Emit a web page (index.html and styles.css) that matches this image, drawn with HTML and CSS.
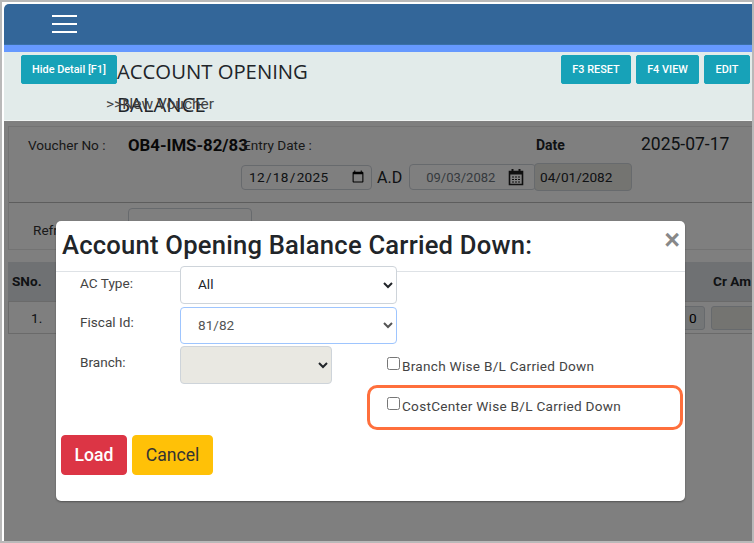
FILE: index.html
```html
<!DOCTYPE html>
<html lang="en">
<head>
<meta charset="utf-8">
<title>Account Opening Balance</title>
<link rel="stylesheet" href="styles.css">
</head>
<body>
<div class="frame">
  <div class="app">
    <nav class="navbar">
      <span class="burger"><i></i><i></i><i></i></span>
    </nav>
    <header class="toolbar">
      <div class="toolbar-left">
        <button class="btn-info btn-hide">Hide Detail [F1]</button>
        <div class="title-block">
          <h1 class="page-title">ACCOUNT OPENING BALANCE</h1>
          <div class="crumb">&gt;&gt;New Voucher</div>
        </div>
      </div>
      <div class="toolbar-right">
        <button class="btn-info btn-reset">F3 RESET</button>
        <button class="btn-info btn-view">F4 VIEW</button>
        <button class="btn-info btn-edit">EDIT</button>
      </div>
    </header>
    <main class="content">
      <section class="panel">
        <div class="panel-top">
          <span class="lbl lbl-voucher">Voucher No :</span>
          <strong class="voucher-no">OB4-IMS-82/83</strong>
          <div class="entry-col">
            <span class="lbl lbl-entry">Entry Date :</span>
            <div class="entry-inputs">
              <input class="date-ad" type="date" value="2025-12-18">
              <span class="ad">A.D</span>
              <span class="date-bs"><span>09/03/2082</span>
                <svg width="16" height="18" viewBox="0 0 16 18"><path d="M1.5 3.5h13v13h-13z" fill="none" stroke="#1f1f1f" stroke-width="1.6"/><path d="M1.5 3h13v3.5h-13z" fill="#1f1f1f"/><path d="M4.5 1v3M11.5 1v3" stroke="#1f1f1f" stroke-width="2"/><path d="M4 9h2M7 9h2M10 9h2M4 11.5h2M7 11.5h2M10 11.5h2M4 14h2M7 14h2M10 14h2" stroke="#1f1f1f" stroke-width="1.2"/></svg>
              </span>
            </div>
          </div>
          <div class="date-col">
            <strong class="lbl-date">Date</strong>
            <input class="date-np" type="text" value="04/01/2082">
          </div>
          <span class="today">2025-07-17</span>
        </div>
        <div class="panel-bottom">
          <span class="lbl lbl-ref">Refrence</span>
          <input class="ref-input" type="text">
        </div>
      </section>
      <section class="grid-table">
        <div class="grid-head"><b class="th-sno">SNo.</b><b class="th-cr">Cr Am</b></div>
        <div class="grid-row"><span class="td-sno">1.</span><span class="td-cells"><span class="cell-dr">0</span><span class="cell-cr"></span></span></div>
      </section>
    </main>
    <div class="backdrop"></div>
    <div class="modal">
      <div class="modal-head">
        <h2 class="modal-title">Account Opening Balance Carried Down:</h2>
        <span class="close">&times;</span>
      </div>
      <div class="modal-body">
        <div class="form-row row-ac">
          <label class="f-label">AC Type:</label>
          <select class="f-select"><option>All</option></select>
        </div>
        <div class="form-row row-fiscal">
          <label class="f-label">Fiscal Id:</label>
          <select class="f-select is-focus"><option>81/82</option></select>
        </div>
        <div class="form-row row-branch">
          <label class="f-label">Branch:</label>
          <select class="f-select is-disabled"><option></option></select>
          <label class="check check-branch"><input type="checkbox"><span>Branch Wise B/L Carried Down</span></label>
        </div>
        <div class="form-row row-cost">
          <label class="check"><input type="checkbox"><span>CostCenter Wise B/L Carried Down</span></label>
        </div>
        <div class="modal-actions">
          <button class="btn-load">Load</button>
          <button class="btn-cancel">Cancel</button>
        </div>
      </div>
      <div class="highlight"></div>
    </div>
  </div>
</div>
</body>
</html>
```
FILE: styles.css
```css
* { box-sizing: border-box; }
html, body { margin: 0; padding: 0; }
body { width: 754px; height: 543px; overflow: hidden; font-family: Roboto, "Liberation Sans", sans-serif; background: #fff; }
button { font-family: inherit; cursor: pointer; }

.frame { width: 754px; height: 543px; border: 2px solid #b9b9b9; padding: 2px 0 0 2px; background: #fff; }
.app { position: relative; width: 748px; height: 537px; overflow: hidden; background: #fff; }

.navbar { height: 41px; background: #336699; border-top-left-radius: 5px; display: flex; align-items: center; padding-left: 48px; border-bottom: 1px solid #3a70a8; }
.burger { display: flex; flex-direction: column; gap: 6px; width: 25px; }
.burger i { display: block; height: 2px; background: #fff; }

.toolbar { height: 76px; background: #e2ebea; border-top: 7px solid #6699ff; display: flex; justify-content: space-between; padding: 3px 2px 0 17px; border-bottom: 1px solid #f0f4f3; }
.toolbar-left { display: flex; align-items: flex-start; }
.toolbar-right { display: flex; gap: 5px; }
.btn-info { height: 29px; background: #17a2b8; border: 1px solid #17a2b8; border-radius: 2px; color: #fff; font-size: 10.9px; font-weight: 500; padding: 0; }
.btn-hide { width: 96px; }
.btn-reset { width: 70px; }
.btn-view { width: 63px; }
.btn-edit { width: 46px; }
.title-block { width: 210px; }
.page-title { margin: 0; font-family: "Open Sans", sans-serif; font-size: 20.3px; font-weight: 400; line-height: 33px; color: #212529; }
.crumb { margin: -26px 0 0 -11px; font-size: 15.5px; line-height: 18px; color: #444; }

.content { padding: 5px 0 0 4px; }
.panel { width: 760px; height: 124px; border: 1px solid #e6e6e6; }
.panel-top { display: flex; border-bottom: 1px solid #bbb; padding-top: 9px; height: 76px; }
.lbl { font-size: 13.6px; color: #333; line-height: 18px; }
.lbl-voucher { margin-left: 19px; width: 100px; flex: none; }
.voucher-no { width: 115px; flex: none; font-size: 16.8px; font-weight: 700; line-height: 18px; color: #111; white-space: nowrap; }
.entry-col { width: 293px; flex: none; }
.lbl-entry { display: block; }
.entry-inputs { display: flex; align-items: center; margin-top: 10px; margin-left: -2px; }
.date-ad { width: 131px; height: 25px; border: 1px solid #ced4da; border-radius: 4px; font-family: Roboto, sans-serif; font-size: 13.6px; padding: 0 4px 0 6px; background: #fff; color: #212529; letter-spacing: .3px; }
.ad { font-size: 16px; color: #212529; margin: 0 7px 0 5px; }
.date-bs { width: 127px; height: 26px; border: 1px solid #ced4da; border-radius: 4px; display: flex; align-items: center; justify-content: space-between; padding: 0 11px 0 16px; font-size: 13px; color: #6c757d; }
.date-col { width: 105px; flex: none; }
.lbl-date { display: block; font-size: 14px; line-height: 18px; color: #212529; }
.date-np { display: block; margin-top: 9px; margin-left: -2px; width: 98px; height: 28px; background: #e9e8e2; border: 1px solid #ced4da; border-radius: 4px; font-family: Roboto, sans-serif; font-size: 13.6px; color: #212529; padding: 0 5px; }
.today { font-size: 17.5px; color: #212529; line-height: 18px; margin-top: -1px; }
.panel-bottom { display: flex; padding-top: 5px; }
.lbl-ref { margin: 13px 0 0 24px; width: 95px; flex: none; }
.ref-input { width: 124px; height: 34px; border: 1px solid #ced4da; border-radius: 4px; background: #fff; }

.grid-table { margin-top: 12px; width: 760px; }
.grid-head { height: 39px; background: #dee2e6; display: flex; align-items: center; padding-left: 4px; font-size: 13.6px; color: #212529; }
.th-sno { width: 701px; flex: none; margin-top: -2px; }
.th-cr { white-space: nowrap; margin-top: -2px; }
.grid-row { height: 33px; width: 744px; border: 1px solid #d5d5d5; border-right: 0; display: flex; align-items: center; justify-content: space-between; }
.td-sno { margin-left: 22px; font-size: 13.6px; color: #212529; }
.td-cells { display: flex; gap: 6px; margin-right: -9px; }
.cell-dr { width: 24px; height: 24px; background: #e9ecef; border: 1px solid #ced4da; border-radius: 3px; font-size: 13.6px; padding: 3px 0 0 7px; }
.cell-cr { width: 50px; height: 24px; background: #e9e8e2; border: 1px solid #ced4da; border-radius: 3px; }

.backdrop { position: absolute; left: 0; right: 0; top: 117px; bottom: 0; background: rgba(0,0,0,.5); }

.modal { position: absolute; left: 52px; top: 217px; width: 629px; height: 280px; background: #fff; border-radius: 5px; box-shadow: 0 1px 2px rgba(0,0,0,.35); }
.modal-head { height: 51px; border-bottom: 1px solid #dee2e6; display: flex; justify-content: space-between; padding: 8px 5px 0 6px; }
.modal-title { margin: 0; font-size: 25.6px; font-weight: 500; line-height: 33px; color: #212529; white-space: nowrap; letter-spacing: .22px; }
.close { font-size: 27px; font-weight: 700; line-height: 20px; color: #888; margin-top: 1px; font-family: "Liberation Sans", sans-serif; }
.modal-body { margin-top: -6px; position: relative; }
.form-row { display: flex; align-items: flex-start; }
.f-label { width: 124px; padding: 8px 0 0 24px; font-size: 13.6px; color: #444; line-height: 18px; flex: none; }
.f-select { width: 217px; height: 38px; border: 1px solid #ced4da; border-radius: 4px; background: #fff; font-family: Roboto, sans-serif; font-size: 13.6px; padding-left: 13px; padding-bottom: 2px; color: #212529; }
.row-fiscal { margin-top: 3px; }
.row-fiscal .f-label { padding-top: 6px; }
.f-select.is-focus { height: 37px; border-color: #9ec5fe; color: #555; }
.row-branch { margin-top: 2px; }
.row-branch .f-label { padding-top: 7px; }
.f-select.is-disabled { width: 152px; background: #e9e8e2; }
.check { display: flex; align-items: flex-start; font-size: 13.6px; color: #444; letter-spacing: .27px; }
.check input { margin: 0 2px 0 0; width: 13px; height: 13px; }
.check span { line-height: 18px; }
.check-branch { margin: 11px 0 0 55px; }
.row-cost { margin: 13px 0 0 331px; height: 25px; }
.modal-actions { display: flex; gap: 5px; padding-left: 5px; margin-top: 13px; }
.btn-load, .btn-cancel { height: 40px; border: 1px solid; border-radius: 4px; font-size: 17.6px; padding: 0; }
.btn-load { width: 66px; background: #dc3545; border-color: #dc3545; color: #fff; font-weight: 500; }
.btn-cancel { width: 81px; background: #ffc107; border-color: #ffc107; color: #333; }
.highlight { position: absolute; left: 311px; top: 164px; width: 316px; height: 45px; border: 3px solid #ff6f3c; border-radius: 10px; }
```
